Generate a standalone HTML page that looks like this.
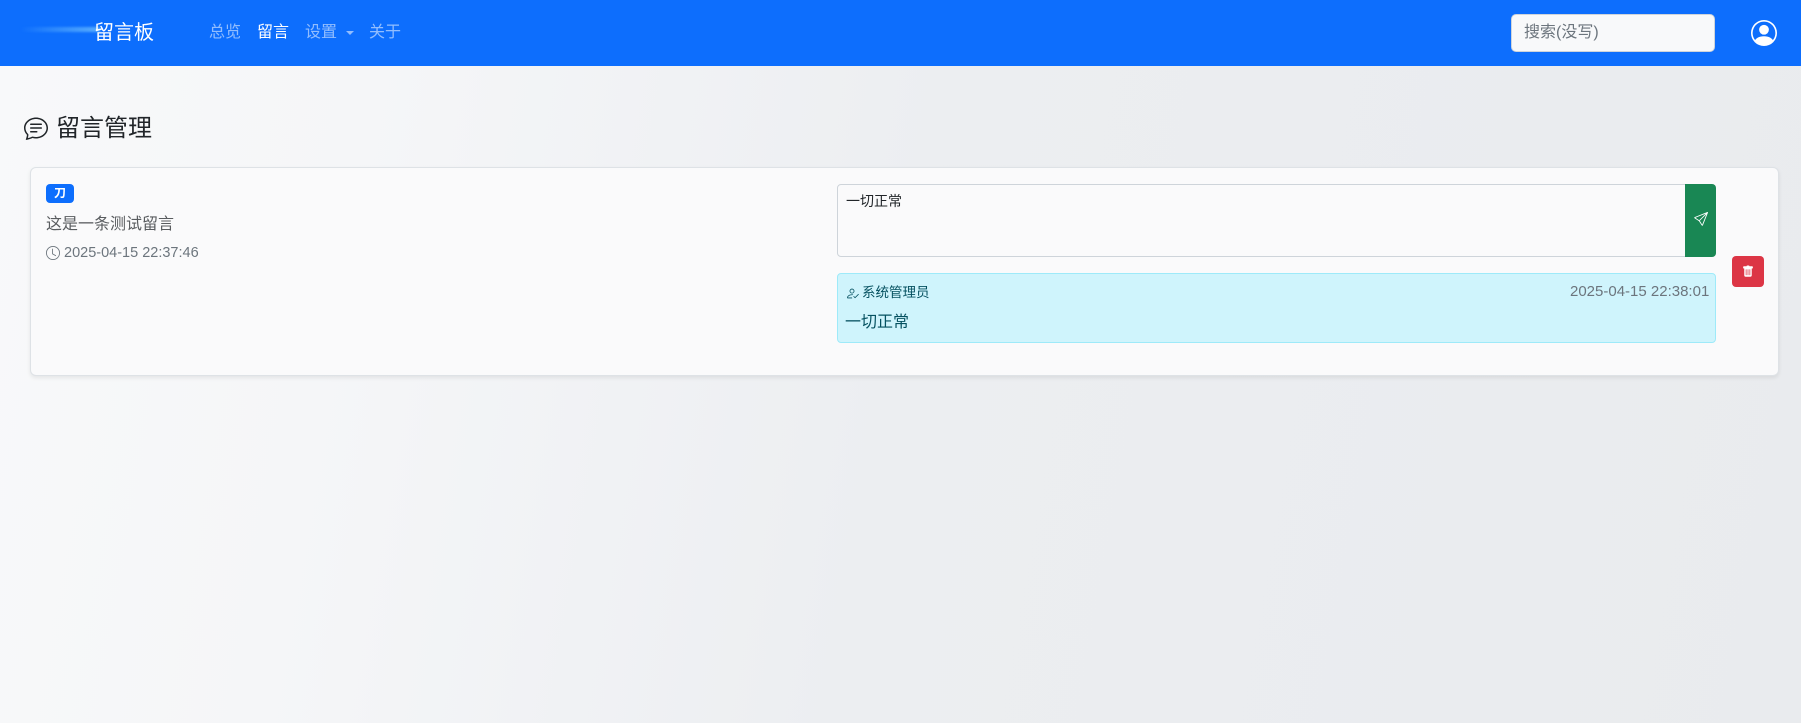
<!DOCTYPE html>
<html><head><meta charset="utf-8"><style>
*{box-sizing:border-box;margin:0;padding:0}
body{width:1801px;height:723px;overflow:hidden;font-family:"Liberation Sans","Noto Sans CJK SC",sans-serif;background:linear-gradient(100deg,#f8f9fa 0%,#f5f6f8 20%,#eceef1 50%,#e9ebee 100%);position:relative;color:#212529}
.nav{position:absolute;left:0;top:0;width:1801px;height:66px;background:#0d6efd}
.abs{position:absolute;white-space:nowrap}
.brand{left:94px;top:19px;font-size:20px;color:#fff;line-height:28px}
.nl{top:22px;font-size:16px;line-height:22px;color:rgba(255,255,255,.55)}
.search{left:1511px;top:14px;width:204px;height:38px;background:#f8f9fa;border:1px solid #ced4da;border-radius:5px;font-size:16px;color:#6c757d;padding:8px 12px;line-height:20px}
.card{left:30px;top:167px;width:1749px;height:209px;background:#fafafb;border:1px solid #dee2e6;border-radius:6px;box-shadow:0 2px 4px rgba(0,0,0,.08)}
</style></head><body>
<div class="nav"></div>
<div class="abs" style="left:20px;top:27px;width:80px;height:5px;background:linear-gradient(90deg,rgba(100,180,255,0),rgba(120,200,255,.7));filter:blur(1px)"></div>
<div class="abs brand">留言板</div>
<div class="abs nl" style="left:209px">总览</div>
<div class="abs nl" style="left:257px;color:#fff">留言</div>
<div class="abs nl" style="left:305px">设置</div>
<div class="abs" style="left:346px;top:31px;width:0;height:0;border-left:4px solid transparent;border-right:4px solid transparent;border-top:4px solid rgba(255,255,255,.55)"></div>
<div class="abs nl" style="left:369px">关于</div>
<div class="abs search">搜索(没写)</div>
<svg class="abs" style="left:1751px;top:20px" width="26" height="26" viewBox="0 0 16 16" fill="#fff"><path d="M11 6a3 3 0 1 1-6 0 3 3 0 0 1 6 0z"/><path fill-rule="evenodd" d="M0 8a8 8 0 1 1 16 0A8 8 0 0 1 0 8zm8-7a7 7 0 0 0-5.468 11.37C3.242 11.226 4.805 10 8 10s4.757 1.225 5.468 2.37A7 7 0 0 0 8 1z"/></svg>
<svg class="abs" style="left:24px;top:116px" width="24" height="24" viewBox="0 0 16 16" fill="#212529"><path d="M2.678 11.894a1 1 0 0 1 .287.801 10.97 10.97 0 0 1-.398 2c1.395-.323 2.247-.697 2.634-.893a1 1 0 0 1 .71-.074A8.06 8.06 0 0 0 8 14c3.996 0 7-2.807 7-6 0-3.192-3.004-6-7-6S1 4.808 1 8c0 1.468.617 2.83 1.678 3.894zm-.493 3.905a21.682 21.682 0 0 1-.713.129c-.2.032-.352-.176-.273-.362a9.68 9.68 0 0 0 .244-.637l.003-.01c.248-.72.45-1.548.524-2.319C.743 11.37 0 9.76 0 8c0-3.866 3.582-7 8-7s8 3.134 8 7-3.582 7-8 7a9.06 9.06 0 0 1-2.347-.306c-.52.263-1.639.742-3.468 1.105z"/><path d="M4 5.5a.5.5 0 0 1 .5-.5h7a.5.5 0 0 1 0 1h-7a.5.5 0 0 1-.5-.5zM4 8a.5.5 0 0 1 .5-.5h7a.5.5 0 0 1 0 1h-7A.5.5 0 0 1 4 8zm0 2.5a.5.5 0 0 1 .5-.5h4a.5.5 0 0 1 0 1h-4a.5.5 0 0 1-.5-.5z"/></svg>
<div class="abs" style="left:56px;top:114px;font-size:24px;line-height:30px">留言管理</div>
<div class="abs card"></div>
<div class="abs" style="left:46px;top:184px;width:28px;height:19px;background:#0d6efd;border-radius:4px;color:#fff;font-size:12px;font-weight:bold;text-align:center;line-height:19px">刀</div>
<div class="abs" style="left:46px;top:214px;font-size:16px;line-height:22px;color:#595c5f">这是一条测试留言</div>
<svg class="abs" style="left:46px;top:246px" width="14" height="14" viewBox="0 0 16 16" fill="#6c757d"><path d="M8 3.5a.5.5 0 0 0-1 0V9a.5.5 0 0 0 .252.434l3.5 2a.5.5 0 0 0 .496-.868L8 8.71V3.5z"/><path d="M8 16A8 8 0 1 0 8 0a8 8 0 0 0 0 16zm7-8A7 7 0 1 1 1 8a7 7 0 0 1 14 0z"/></svg>
<div class="abs" style="left:64px;top:244px;font-size:14.5px;line-height:18px;color:#6c757d">2025-04-15 22:37:46</div>
<div class="abs" style="left:837px;top:184px;width:850px;height:73px;background:#fafafb;border:1px solid #ced4da;border-radius:4px 0 0 4px;font-size:14px;padding:6px 8px;color:#212529">一切正常</div>
<div class="abs" style="left:1685px;top:184px;width:31px;height:73px;background:#198754;border-radius:0 4px 4px 0"></div>
<svg class="abs" style="left:1694px;top:212px" width="14" height="14" viewBox="0 0 16 16" fill="#fff"><path d="M15.854.146a.5.5 0 0 1 .11.54l-5.819 14.547a.75.75 0 0 1-1.329.124l-3.178-4.995L.643 7.184a.75.75 0 0 1 .124-1.33L15.314.037a.5.5 0 0 1 .54.11zM6.636 10.07l2.761 4.338L14.13 2.576 6.636 10.07zm6.787-8.201L1.591 6.602l4.339 2.76 7.494-7.493z"/></svg>
<div class="abs" style="left:837px;top:273px;width:879px;height:70px;background:#cff4fc;border:1px solid #9eeaf9;border-radius:4px"></div>
<svg class="abs" style="left:845px;top:287px" width="14" height="13" viewBox="0 0 16 16" fill="#055160"><path d="M11 5a3 3 0 1 1-6 0 3 3 0 0 1 6 0M8 7a2 2 0 1 0 0-4 2 2 0 0 0 0 4m.256 7a4.5 4.5 0 0 1-.229-1.004H3c.001-.246.154-.986.832-1.664C4.484 10.68 5.711 10 8 10q.39 0 .74.025c.226-.341.496-.65.804-.918Q8.844 9.002 8 9c-5 0-6 3-6 4s1 1 1 1zm3.5-1.5 4-4 .7.7-4.7 4.7-2.2-2.2.7-.7z"/></svg>
<div class="abs" style="left:862px;top:283px;font-size:13.5px;line-height:20px;color:#055160">系统管理员</div>
<div class="abs" style="left:1570px;top:282px;font-size:15px;line-height:20px;color:#6c757d">2025-04-15 22:38:01</div>
<div class="abs" style="left:845px;top:312px;font-size:16px;line-height:22px;color:#055160">一切正常</div>
<div class="abs" style="left:1732px;top:256px;width:32px;height:31px;background:#dc3545;border-radius:4px"></div>
<svg class="abs" style="left:1742px;top:265px" width="12" height="13" viewBox="0 0 16 16" fill="#fff"><path d="M2.5 1a1 1 0 0 0-1 1v1a1 1 0 0 0 1 1H3v9a2 2 0 0 0 2 2h6a2 2 0 0 0 2-2V4h.5a1 1 0 0 0 1-1V2a1 1 0 0 0-1-1H10a1 1 0 0 0-1-1H7a1 1 0 0 0-1 1H2.5zm3 4a.5.5 0 0 1 .5.5v7a.5.5 0 0 1-1 0v-7a.5.5 0 0 1 .5-.5zM8 5a.5.5 0 0 1 .5.5v7a.5.5 0 0 1-1 0v-7A.5.5 0 0 1 8 5zm3 .5v7a.5.5 0 0 1-1 0v-7a.5.5 0 0 1 1 0z"/></svg>
</body></html>
